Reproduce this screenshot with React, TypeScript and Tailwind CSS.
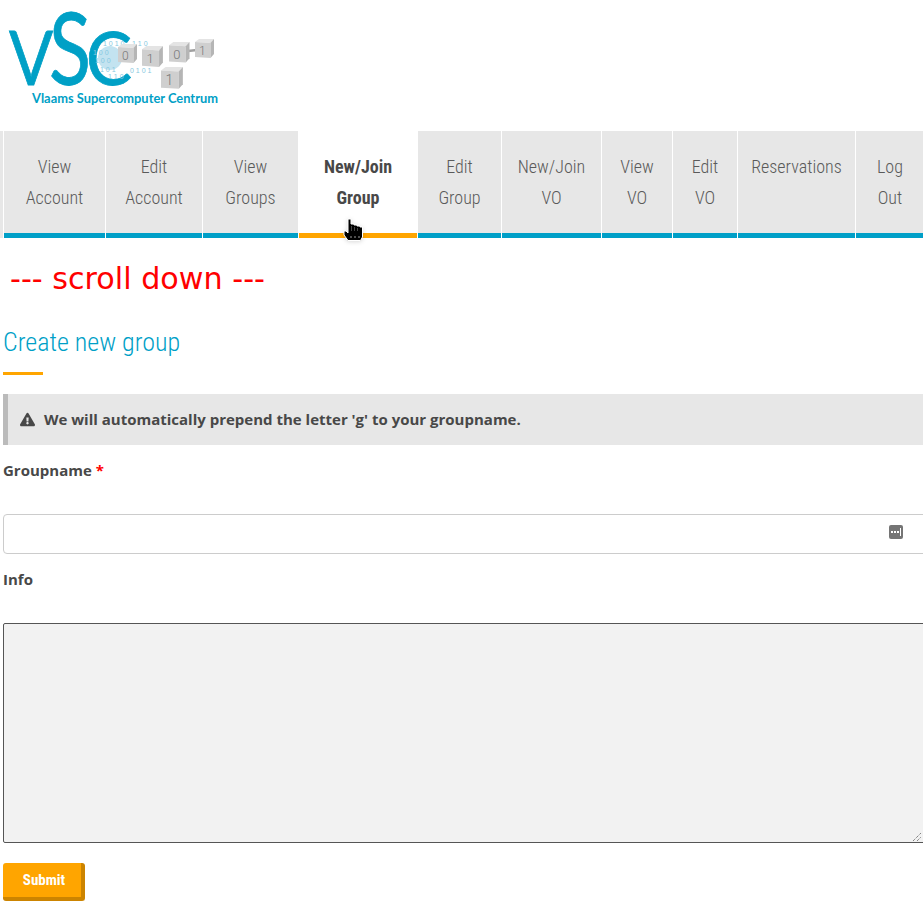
import React from 'react';
import { FaExclamationTriangle } from 'react-icons/fa';

const tabs = [
  { a: 'View', b: 'Account', w: 'w-[101px]' },
  { a: 'Edit', b: 'Account', w: 'w-[96px]' },
  { a: 'View', b: 'Groups', w: 'w-[95px]' },
  { a: 'New/Join', b: 'Group', w: 'w-[118px]', active: true },
  { a: 'Edit', b: 'Group', w: 'w-[83px]' },
  { a: 'New/Join', b: 'VO', w: 'w-[99px]' },
  { a: 'View', b: 'VO', w: 'w-[70px]' },
  { a: 'Edit', b: 'VO', w: 'w-[64px]' },
  { a: 'Reservations', b: '', w: 'w-[117px]' },
  { a: 'Log', b: 'Out', w: 'w-[68px]' },
];

const Cube = ({ x, y, s, label }: { x: number; y: number; s: number; label: string }) => (
  <g transform={`translate(${x} ${y}) scale(${s})`}>
    <path d="M0 3 L4 0 L19 0 L16 4 Z" fill="#e4e4e4" />
    <path d="M0 3 L15.5 4 L15.5 19 L0 18 Z" fill="#cfcfcf" />
    <path d="M15.5 4 L19 0 L19 15 L15.5 19 Z" fill="#b5b5b5" />
    <text x="4" y="15.5" fontSize="12" fontWeight="300" fill="#777" fontFamily="Roboto, sans-serif">{label}</text>
  </g>
);

const Logo = () => (
  <svg width="230" height="112" viewBox="0 0 230 112" className="block">
    <g fill="#00a0c6" stroke="#00a0c6" strokeWidth="0.8" fontFamily="Lato, sans-serif">
      <text x="9" y="85" fontSize="76" textLength="44" lengthAdjust="spacingAndGlyphs">V</text>
      <text x="49" y="85" fontSize="100" textLength="42" lengthAdjust="spacingAndGlyphs">S</text>
      <text x="86" y="85" fontSize="74" textLength="46" lengthAdjust="spacingAndGlyphs">C</text>
    </g>
    <circle cx="110" cy="58" r="12" fill="#b4dcec" opacity="0.8" />
    <g fill="#86c8e0" fontSize="7" fontFamily="Liberation Sans, sans-serif">
      <text x="103" y="46">1 0 1 0</text>
      <text x="93" y="55">1 0 0</text>
      <text x="95" y="63">1 0 0</text>
      <text x="100" y="72">1 0 1</text>
      <text x="108" y="79">1 1 0</text>
      <text x="132" y="46">1 1 0</text>
      <text x="130" y="73">0 1 0 1</text>
    </g>
    <path d="M188 51 L197 50" stroke="#a0a0a0" strokeWidth="2.5" />
    <Cube x={118} y={44} s={1} label="0" />
    <Cube x={142} y={46} s={1.1} label="1" />
    <Cube x={169} y={42} s={1.08} label="0" />
    <Cube x={195} y={39} s={1} label="1" />
    <Cube x={161} y={67} s={1.15} label="1" />
    <text x="32" y="103" fontSize="12.5" fontWeight="700" fill="#00a0c6" fontFamily="Lato, sans-serif" textLength="186" lengthAdjust="spacingAndGlyphs">
      Vlaams Supercomputer Centrum
    </text>
  </svg>
);

const HandCursor = () => (
  <svg width="22" height="25" viewBox="0 0 22 25" className="absolute left-[343px] top-[218px] drop-shadow-sm">
    <path
      d="M5 1 H8 V6 H11 V7 H14 V8 H17 V9 H19.5 V19 L17.5 22.5 H5 L1 17 V13 H3 L5 15 Z"
      fill="#000"
      stroke="#fff"
      strokeWidth="1"
    />
    <path d="M8.5 8 v5 M11.5 9 v4 M14.5 10 v3" stroke="#444" strokeWidth="1" />
    <path d="M7 19 h2 M11 19 h2 M15 19 h2" stroke="#999" strokeWidth="1" />
  </svg>
);

export default function App() {
  return (
    <div className="relative h-[916px] overflow-hidden bg-white font-['Open_Sans',sans-serif] text-[#484848]">
      <header className="h-[131px]">
        <Logo />
      </header>

      <nav className="flex h-[107px] gap-px font-['Roboto',sans-serif] text-[18px] font-light leading-[31px] [font-stretch:75%]">
        <div className="w-[3px] shrink-0 bg-[#e7e7e7]" />
        {tabs.map((t, i) => (
          <div
            key={i}
            className={`${t.w} shrink-0 border-b-[5px] pt-[20px] text-center whitespace-nowrap ${
              t.active
                ? 'border-[#ffa500] bg-white font-bold text-[#484848]'
                : 'border-[#009fc7] bg-[#e7e7e7] text-[#5a5a5a]'
            }`}
          >
            {t.a}
            <br />
            {t.b}
          </div>
        ))}
      </nav>

      <main className="pl-[3px]">
        <p className="mt-[20px] ml-[7px] font-['DejaVu_Sans',sans-serif] text-[30.2px] leading-[42px] text-[#ff0000]">
          --- scroll down ---
        </p>

        <h2 className="mt-[24px] font-['Roboto',sans-serif] text-[26px] font-light leading-[36px] text-[#009fc7] [font-stretch:75%]">
          Create new group
        </h2>
        <div className="mt-[12px] h-[3px] w-[40px] bg-[#ffa500]" />

        <div className="mt-[19px] flex h-[51px] items-center gap-[9px] border-l-[5px] border-[#bbb] bg-[#e7e7e7] pl-[12px] text-[15px] font-bold">
          <FaExclamationTriangle size={15} color="#484848" />
          <span>We will automatically prepend the letter 'g' to your groupname.</span>
        </div>

        <label className="mt-[15px] block text-[15px] font-bold leading-[20px]">
          Groupname <span className="text-[#ff0000]">*</span>
        </label>
        <div className="relative mt-[34px] -mr-2 h-[40px] rounded-[4px] border border-[#ccc] bg-white">
          <div className="absolute right-[27px] top-[10px] flex h-[14px] w-[14px] items-center justify-center gap-px rounded-[2px] bg-[#757575]">
            <span className="h-[2px] w-[2px] bg-white" />
            <span className="h-[2px] w-[2px] bg-white" />
            <span className="h-[2px] w-[2px] bg-white" />
            <span className="h-[8px] w-px bg-white" />
          </div>
        </div>

        <label className="mt-[15px] block text-[15px] font-bold leading-[20px]">Info</label>
        <div className="relative mt-[34px] -mr-2 h-[220px] rounded-[2px] border border-[#555] bg-[#f2f2f2]">
          <svg width="10" height="10" viewBox="0 0 10 10" className="absolute bottom-0 right-[8px]">
            <path d="M1 9 L9 1 M5 9 L9 5" stroke="#555" strokeWidth="1" strokeDasharray="1 1" />
          </svg>
        </div>

        <button className="mt-[20px] h-[38px] w-[82px] rounded-[3px] border-r-[4px] border-b-[4px] border-[#cc8400] bg-[#ffa500] pl-1 font-['Roboto',sans-serif] text-[15px] font-bold text-white [font-stretch:75%]">
          Submit
        </button>
      </main>

      <HandCursor />
    </div>
  );
}
